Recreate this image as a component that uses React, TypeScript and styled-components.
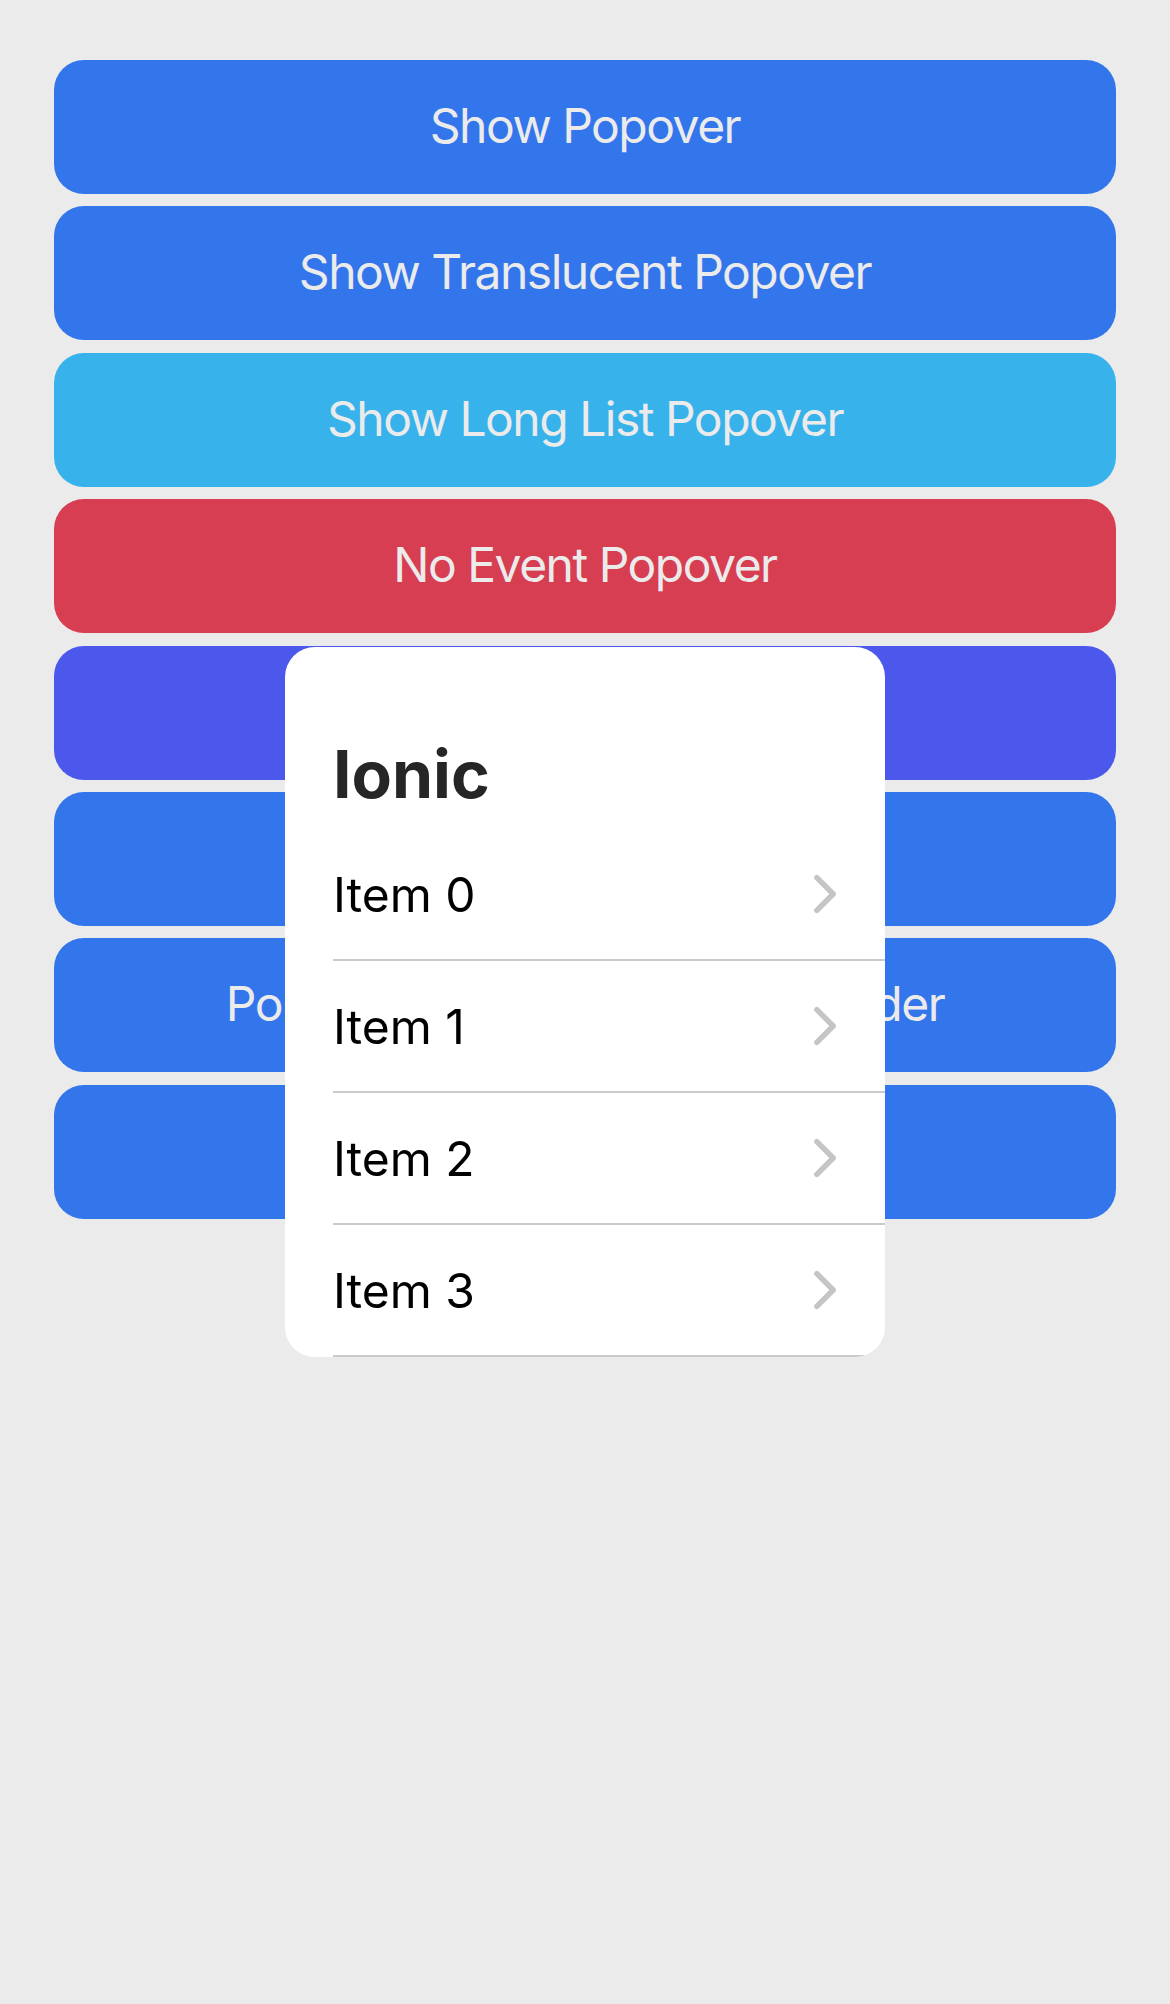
import styled, { createGlobalStyle } from "styled-components";

type Tone = "primary" | "secondary" | "danger" | "tertiary";

const palette: Record<Tone, string> = {
  primary: "#3880ff",
  secondary: "#3dc2ff",
  danger: "#eb445a",
  tertiary: "#5260ff"
};

const buttons: { label: string; tone: Tone }[] = [
  { label: "Show Popover", tone: "primary" },
  { label: "Show Translucent Popover", tone: "primary" },
  { label: "Show Long List Popover", tone: "secondary" },
  { label: "No Event Popover", tone: "danger" },
  { label: "Custom Class Popover", tone: "tertiary" },
  { label: "Popover With Header", tone: "primary" },
  { label: "Popover With Translucent Header", tone: "primary" },
  { label: "Nested Popover", tone: "primary" }
];

const items = Array.from({ length: 10 }, (_, i) => `Item ${i}`);

const GlobalStyle = createGlobalStyle`
  html, body {
    margin: 0;
    padding: 0;
    background: #ffffff;
    font-family: Inter, "Noto Sans", sans-serif;
  }
  #root {
    min-height: 2004px;
  }
`;

const Content = styled.main({
  display: "flex",
  flexDirection: "column",
  gap: "12.4px",
  padding: "60px 48px 48px"
});

const BlockButton = styled.button<{ $tone: Tone }>(({ $tone }) => ({
  display: "flex",
  alignItems: "center",
  justifyContent: "center",
  height: "134px",
  margin: "0 6px",
  padding: "0 0 3px",
  border: "none",
  borderRadius: "30px",
  backgroundColor: palette[$tone],
  color: "#ffffff",
  fontFamily: "Inter, sans-serif",
  fontSize: "48px",
  fontWeight: 400,
  letterSpacing: "-1.5px",
  whiteSpace: "nowrap",
  overflow: "hidden",
  cursor: "pointer"
}));

const Backdrop = styled.div({
  position: "fixed",
  inset: 0,
  display: "flex",
  alignItems: "center",
  justifyContent: "center",
  backgroundColor: "rgba(0, 0, 0, 0.08)"
});

const Popover = styled.div({
  width: "600px",
  height: "710px",
  backgroundColor: "#ffffff",
  borderRadius: "30px",
  overflow: "hidden"
});

const ListHeader = styled.div({
  boxSizing: "border-box",
  height: "182px",
  padding: "94px 0 0 48px",
  fontFamily: "Inter, sans-serif",
  fontSize: "66px",
  fontWeight: 700,
  lineHeight: "66px",
  color: "#262626"
});

const Item = styled.div({
  height: "132px",
  paddingLeft: "48px",
  "& .item-inner": {
    boxSizing: "border-box",
    display: "flex",
    alignItems: "center",
    height: "100%",
    paddingRight: "31px",
    borderBottom: "2px solid #cbcbcf"
  },
  "& .item-label": {
    flex: 1,
    fontFamily: "Inter, sans-serif",
    fontSize: "48px",
    color: "#000000"
  }
});

const Chevron = () => (
  <svg width="58" height="58" viewBox="0 0 512 512" aria-hidden="true">
    <path
      d="M184 112l144 144-144 144"
      fill="none"
      stroke="#c5c5c5"
      strokeWidth="48"
      strokeLinecap="round"
      strokeLinejoin="round"
    />
  </svg>
);

const App = () => {
  return (
    <>
      <GlobalStyle />
      <Content>
        {buttons.map(b => (
          <BlockButton key={b.label} $tone={b.tone}>
            {b.label}
          </BlockButton>
        ))}
      </Content>
      <Backdrop>
        <Popover>
          <ListHeader>Ionic</ListHeader>
          {items.map(item => (
            <Item key={item}>
              <div className="item-inner">
                <span className="item-label">{item}</span>
                <Chevron />
              </div>
            </Item>
          ))}
        </Popover>
      </Backdrop>
    </>
  );
};

export default App;
